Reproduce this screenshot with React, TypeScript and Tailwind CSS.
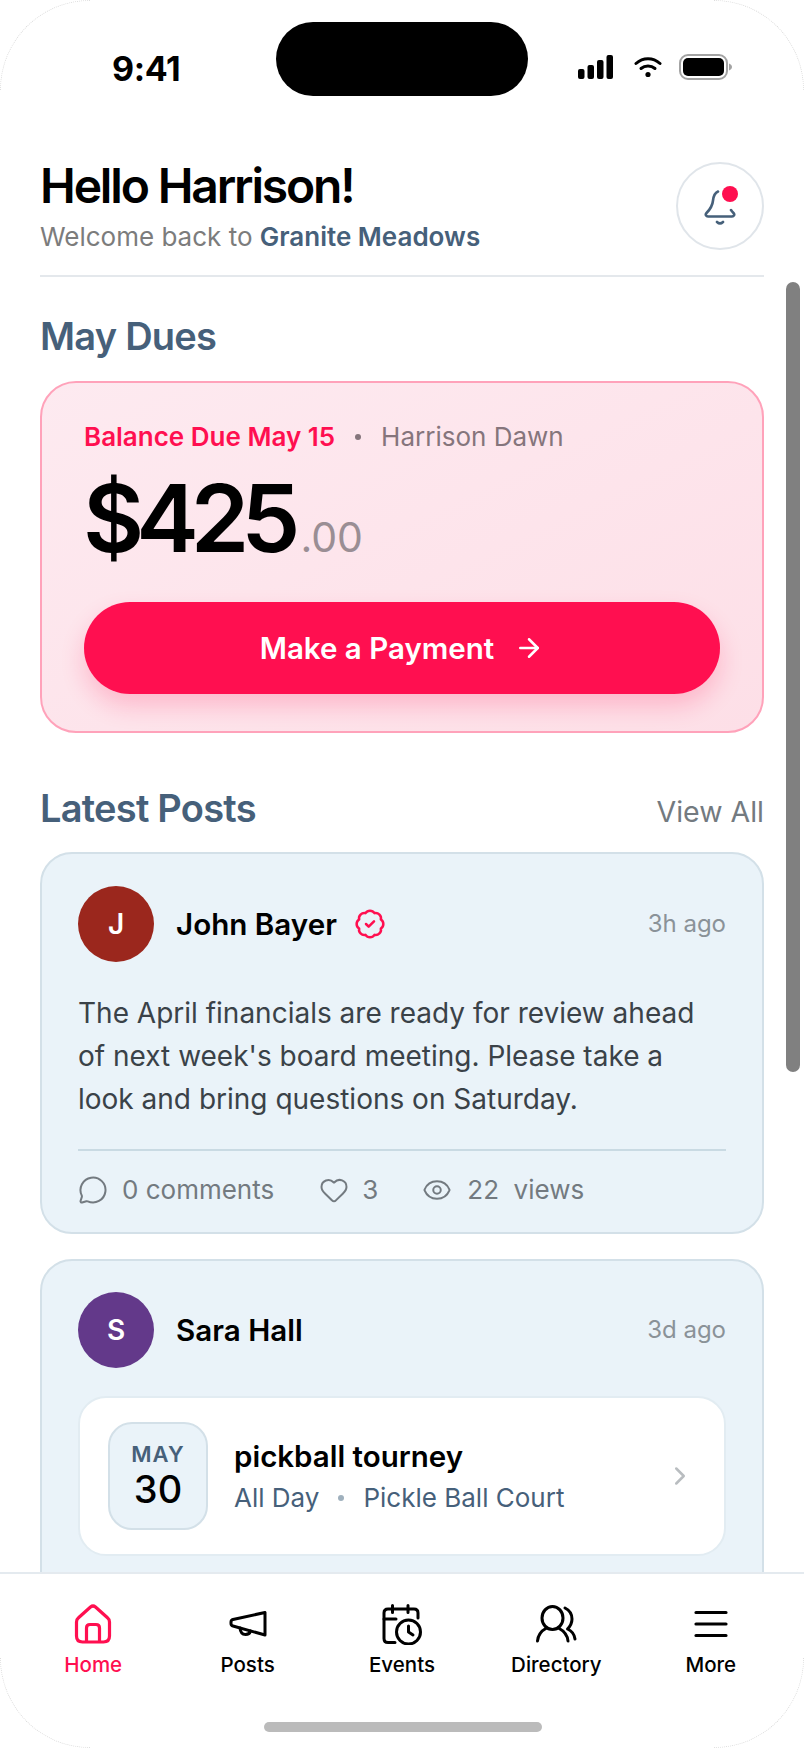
import { ArrowRight, BadgeCheck, ChevronRight, Eye, Heart, MessageCircle } from 'lucide-react'

function StatusIcons() {
  return (
    <div className="flex items-center gap-[20px]">
      <svg width="36" height="24" viewBox="0 0 36 24" fill="#000">
        <rect x="0" y="14" width="6.5" height="10" rx="2" />
        <rect x="9.5" y="10" width="6.5" height="14" rx="2" />
        <rect x="19" y="5" width="6.5" height="19" rx="2" />
        <rect x="28.5" y="0" width="6.5" height="24" rx="2" />
      </svg>
      <svg width="28" height="22" viewBox="0 0 28 22" fill="none" stroke="#000" strokeWidth="3" strokeLinecap="round">
        <path d="M2 7.5C9 1 19 1 26 7.5" />
        <path d="M7 12.5C11 9 17 9 21 12.5" />
        <circle cx="14" cy="18.5" r="2.6" fill="#000" stroke="none" />
      </svg>
      <svg width="53" height="26" viewBox="0 0 53 26" fill="none" className="-ml-[3px]">
        <rect x="1" y="1" width="47" height="24" rx="8" stroke="#a3a3a3" strokeWidth="2" />
        <rect x="4" y="4" width="41" height="18" rx="5" fill="#000" />
        <path d="M50 9.5c2 .8 3 2 3 3.5s-1 2.7-3 3.5z" fill="#a3a3a3" />
      </svg>
    </div>
  )
}

function BellIcon() {
  return (
    <svg width="32" height="35" viewBox="0 0 32 35" fill="none" stroke="#46607a" strokeWidth="2.6" strokeLinecap="round" strokeLinejoin="round" className="mt-[3px]">
      <path d="M14 1.500C10.500 3 9.500 6 9 10.500C8.500 16 6.500 19 2.500 23C1 24.500 2 26.500 4 26.500H28C30 26.500 31 24.500 29.500 23C28.500 22 27.800 21.200 27 20" />
      <path d="M13 32C14.800 33.700 17.200 33.700 19 32" />
    </svg>
  )
}

function HomeIcon() {
  return (
    <svg width="38" height="40" viewBox="0 0 38 40" fill="none" stroke="#ff0f50" strokeWidth="3.2" strokeLinejoin="round">
      <path d="M2.500 18Q2.500 15.500 4.500 13.800L16.500 3Q19 1 21.500 3L33.500 13.800Q35.500 15.500 35.500 18V32Q35.500 38 29.500 38H8.500Q2.500 38 2.500 32Z" />
      <path d="M12.500 38V24Q12.500 20.500 16 20.500H22Q25.500 20.500 25.500 24V38" />
    </svg>
  )
}

function PostsIcon() {
  return (
    <svg width="38" height="28" viewBox="0 0 38 28" fill="none" stroke="#000" strokeWidth="3" strokeLinejoin="round" strokeLinecap="round">
      <path d="M36 2.500V25L4 16Q2 15.500 2 13.500V12Q2 10 4 9.500Z" />
      <path d="M11 18Q11.500 24.500 16.500 24.500Q20.500 24.500 21.500 21" />
    </svg>
  )
}

function EventsIcon() {
  return (
    <svg width="40" height="41" viewBox="0 0 40 41" fill="none" stroke="#000" strokeWidth="3" strokeLinecap="round" strokeLinejoin="round">
      <path d="M13 38.500H6Q2 38.500 2 34.500V9Q2 5 6 5H32Q36 5 36 9V14" />
      <path d="M10.500 1.500V8.500M26 1.500V8.500M2 15H14" />
      <circle cx="26.500" cy="28" r="12" />
      <path d="M26.500 22V28L31 31" />
    </svg>
  )
}

function DirectoryIcon() {
  return (
    <svg width="42" height="38" viewBox="0 0 42 38" fill="none" stroke="#000" strokeWidth="3" strokeLinecap="round" strokeLinejoin="round">
      <ellipse cx="17.500" cy="13" rx="10.500" ry="11.500" />
      <path d="M2.500 36C3 30 7 25.500 11.500 23M23.500 23C29 26 32.500 30 33 36" />
      <path d="M30 3C35 5.500 37 10 37 14C37 18 35 21.500 32.500 24C37 26 39.500 30 40 34" />
    </svg>
  )
}

function MoreIcon() {
  return (
    <svg width="34" height="28" viewBox="0 0 34 28" fill="none" stroke="#000" strokeWidth="3.2" strokeLinecap="round">
      <path d="M2 2.500H32M2 14H32M2 25.500H32" />
    </svg>
  )
}

function Avatar({ letter, color }: { letter: string; color: string }) {
  return (
    <div className={`w-[76px] h-[76px] rounded-full flex items-center justify-center text-white text-[28px] font-semibold ${color}`}>
      {letter}
    </div>
  )
}

const tabs = [
  { label: 'Home', icon: <HomeIcon />, active: true },
  { label: 'Posts', icon: <PostsIcon /> },
  { label: 'Events', icon: <EventsIcon /> },
  { label: 'Directory', icon: <DirectoryIcon /> },
  { label: 'More', icon: <MoreIcon /> },
]

export default function App() {
  return (
    <div className="relative w-[804px] h-[1748px] overflow-hidden bg-white flex flex-col font-['Inter',sans-serif] text-black">
      {/* Status bar */}
      <div className="h-[162px] shrink-0 relative px-[112px] pt-[48px] flex justify-between items-start">
        <span className="text-[34px] leading-[42px] font-bold tracking-[-0.01em]">9:41</span>
        <div className="absolute left-[276px] top-[22px] w-[252px] h-[74px] rounded-full bg-black" />
        <div className="absolute left-[578px] top-[54px]">
          <StatusIcons />
        </div>
      </div>

      {/* Header */}
      <div className="shrink-0 mx-[40px] pb-[25px] border-b-2 border-[#e4e8ec]">
        <div className="h-[88px] flex items-start justify-between">
          <div>
            <h1 className="text-[48px] leading-[56px] font-semibold tracking-[-0.045em] -mt-[4px]">Hello Harrison!</h1>
            <p className="text-[26px] leading-[32px] mt-[7px] text-[#7c7c7c] whitespace-nowrap">
              Welcome back to <span className="font-semibold text-[#46607a]">Granite Meadows</span>
            </p>
          </div>
          <div className="relative w-[88px] h-[88px] rounded-full border-2 border-[#e0e5ea] flex items-center justify-center">
            <BellIcon />
            <span className="absolute left-[44px] top-[22px] w-[16px] h-[16px] rounded-full bg-[#ff0f50]" />
          </div>
        </div>
      </div>

      {/* Scrolling content */}
      <div className="flex-1 min-h-0 overflow-hidden px-[40px]">
        <h2 className="text-[38px] leading-[44px] font-semibold tracking-[-0.02em] text-[#46607a] mt-[37px]">May Dues</h2>

        <div className="mt-[23px] h-[352px] rounded-[36px] border-2 border-[#ffa2ba] bg-linear-to-br from-[#fdeaf0] to-[#fddfe7] px-[42px] pt-[37px]">
          <div className="flex items-center text-[26px] leading-[34px]">
            <span className="font-semibold text-[#ff0f50]">Balance Due May 15</span>
            <span className="mx-[20px] w-[6px] h-[6px] rounded-full bg-[#85757c]" />
            <span className="text-[#85757c]">Harrison Dawn</span>
          </div>
          <div className="flex items-baseline mt-[14px] leading-[100px] h-[100px] -ml-[1px]">
            <span className="text-[94px] font-semibold tracking-[-0.085em]">$425</span>
            <span className="text-[41px] ml-[8px] text-[#9a8e94]">.00</span>
          </div>
          <button className="mt-[34px] w-full h-[92px] rounded-full bg-[#ff0f50] text-white text-[29.5px] font-semibold flex items-center justify-center gap-[20px] shadow-[0_12px_24px_rgba(255,15,80,0.2)]">
            Make a Payment
            <ArrowRight size={30} strokeWidth={2} />
          </button>
        </div>

        <div className="mt-[53px] flex items-center justify-between h-[44px]">
          <h2 className="text-[38px] leading-[44px] font-semibold tracking-[-0.02em] text-[#46607a]">Latest Posts</h2>
          <span className="text-[28.5px] leading-[36px] mt-[8px] text-[#737a80]">View All</span>
        </div>

        <div className="mt-[22px] h-[382px] rounded-[32px] border-2 border-[#d3e0e8] bg-[#eaf3f9] px-[36px] pt-[32px]">
          <div className="flex items-center">
            <Avatar letter="J" color="bg-[#9b271d]" />
            <span className="ml-[22px] text-[29.6px] font-semibold leading-[38px]">John Bayer</span>
            <BadgeCheck size={32} strokeWidth={1.9} className="ml-[17px] text-[#ff0f50]" />
            <span className="ml-auto text-[24px] text-[#8a9298]">3h ago</span>
          </div>
          <p className="mt-[30px] text-[28px] leading-[43px] text-[#3a4248] whitespace-nowrap">
            The April financials are ready for review ahead
            <br />
            of next week's board meeting. Please take a
            <br />
            look and bring questions on Saturday.
          </p>
          <div className="mt-[28px] pt-[22px] border-t-2 border-[#c9dae3] flex items-center text-[26px] leading-[34px] text-[#737a80]">
            <MessageCircle size={30} strokeWidth={1.6} />
            <span className="ml-[14px]">0 comments</span>
            <Heart size={30} strokeWidth={1.6} className="ml-[45px]" />
            <span className="ml-[13px]">3</span>
            <Eye size={30} strokeWidth={1.6} className="ml-[44px]" />
            <span className="ml-[15px] whitespace-pre">22  views</span>
          </div>
        </div>

        <div className="mt-[25px] h-[400px] rounded-[32px] border-2 border-[#d3e0e8] bg-[#eaf3f9] px-[36px] pt-[31px]">
          <div className="flex items-center">
            <Avatar letter="S" color="bg-[#63398a]" />
            <span className="ml-[22px] text-[29.6px] font-semibold leading-[38px]">Sara Hall</span>
            <span className="ml-auto text-[24px] text-[#8a9298]">3d ago</span>
          </div>
          <div className="mt-[28px] h-[160px] rounded-[28px] border-2 border-[#e2ecf2] bg-white flex items-center pl-[28px] pr-[29px]">
            <div className="w-[100px] h-[108px] rounded-[24px] border-2 border-[#d3e0e8] bg-[#eaf3f9] flex flex-col items-center justify-center">
              <span className="text-[22px] leading-[26px] font-semibold tracking-[0.05em] text-[#46607a]">MAY</span>
              <span className="text-[38px] leading-[44px] font-medium">30</span>
            </div>
            <div className="ml-[26px]">
              <div className="text-[29.5px] leading-[38px] font-semibold">pickball tourney</div>
              <div className="mt-[5px] flex items-center text-[26px] leading-[36px] text-[#46607a]">
                All Day
                <span className="mx-[19px] w-[6px] h-[6px] rounded-full bg-[#9fb0bd]" />
                Pickle Ball Court
              </div>
            </div>
            <ChevronRight size={30} strokeWidth={2} className="ml-auto text-[#b9bdc0]" />
          </div>
        </div>
      </div>

      {/* Tab bar */}
      <div className="shrink-0 h-[176px] border-t-2 border-[#e4eaef] bg-white px-[16px] relative">
        <div className="grid grid-cols-5 pt-[29px]">
          {tabs.map((t) => (
            <div key={t.label} className="flex flex-col items-center">
              <div className="h-[42px] flex items-center justify-center">{t.icon}</div>
              <span className={`mt-[6px] text-[20.5px] leading-[28px] font-medium ${t.active ? 'text-[#ff0f50]' : 'text-black'}`}>
                {t.label}
              </span>
            </div>
          ))}
        </div>
        <div className="absolute left-[264px] bottom-[16px] w-[278px] h-[10px] rounded-full bg-[#bbbbbb]" />
      </div>

      {/* Scrollbar and faint device corners sit over everything */}
      <div className="absolute left-[786px] top-[282px] w-[14px] h-[790px] rounded-full bg-[#808080]" />
      <div className="absolute left-0 top-0 w-[90px] h-[90px] rounded-tl-[90px] border-t border-l border-dotted border-[#dddddd] pointer-events-none" />
      <div className="absolute right-0 top-0 w-[90px] h-[90px] rounded-tr-[90px] border-t border-r border-dotted border-[#dddddd] pointer-events-none" />
      <div className="absolute left-0 bottom-0 w-[90px] h-[90px] rounded-bl-[90px] border-b border-l border-dotted border-[#dddddd] pointer-events-none" />
      <div className="absolute right-0 bottom-0 w-[90px] h-[90px] rounded-br-[90px] border-b border-r border-dotted border-[#dddddd] pointer-events-none" />
    </div>
  )
}
